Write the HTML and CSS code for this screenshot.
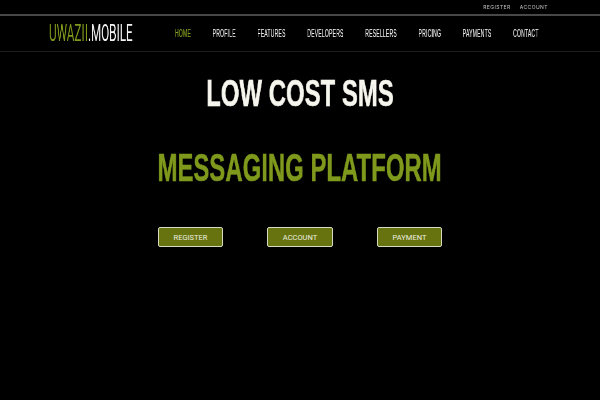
FILE: index.html
```html
<!DOCTYPE html>
<html lang="en">
<head>
<meta charset="utf-8">
<title>Uwazii Mobile</title>
<link rel="stylesheet" href="styles.css">
</head>
<body>
<div class="topbar">
  <a href="#">REGISTER</a>
  <a href="#">ACCOUNT</a>
</div>
<header class="header">
  <a class="logo" href="#"><span class="squeeze"><span class="green">UWAZII</span>.MOBILE</span></a>
  <nav class="nav">
    <a class="active" href="#">HOME</a>
    <a href="#">PROFILE</a>
    <a href="#">FEATURES</a>
    <a href="#">DEVELOPERS</a>
    <a href="#">RESELLERS</a>
    <a href="#">PRICING</a>
    <a href="#">PAYMENTS</a>
    <a href="#">CONTACT</a>
  </nav>
</header>
<main class="hero">
  <h1 class="title white"><span class="squeeze">LOW COST SMS</span></h1>
  <h1 class="title green second"><span class="squeeze">MESSAGING PLATFORM</span></h1>
  <div class="buttons">
    <a class="btn" href="#">REGISTER</a>
    <a class="btn" href="#">ACCOUNT</a>
    <a class="btn" href="#">PAYMENT</a>
  </div>
</main>
</body>
</html>
```
FILE: styles.css
```css
* { box-sizing: border-box; }
html, body { margin: 0; padding: 0; }
body {
  width: 600px;
  height: 400px;
  overflow: hidden;
  background: #000;
  color: #fff;
  font-family: "Liberation Sans", sans-serif;
}
a { color: inherit; text-decoration: none; }
.squeeze { display: inline-block; white-space: nowrap; will-change: transform; }
.green { color: #7f991c; }

.topbar {
  height: 16px;
  border-bottom: 2px solid #484848;
  display: flex;
  justify-content: flex-end;
  align-items: center;
  gap: 9px;
  padding: 0 52px 0 0;
  font-family: Inter, sans-serif;
  font-size: 5px;
  letter-spacing: 0.45px;
  color: #c4c4c4;
  will-change: transform;
}
.header {
  height: 36px;
  border-bottom: 1px solid #1c1c1c;
  display: flex;
  align-items: center;
  padding-left: 49px;
}
.logo {
  width: 104px;
  flex: none;
  font-family: Roboto, sans-serif;
  font-weight: 400;
  font-size: 23px;
  line-height: 36px;
  color: #f2f2f2;
}
.logo .squeeze { transform: scaleX(0.51); transform-origin: left center; }
.nav {
  display: flex;
  flex: none;
  width: 780px;
  font-family: "Liberation Sans", sans-serif;
  font-size: 10px;
  color: #ececec;
  margin-left: 22px;
  gap: 43px;
  letter-spacing: 0.4px;
  transform: scaleX(0.505);
  transform-origin: left center;
  will-change: transform;
  -webkit-text-stroke: 0.15px currentColor;
}
.nav .active { color: #8aa324; }

.hero { display: flex; flex-direction: column; align-items: center; }
.title {
  margin: 0;
  font-family: "Liberation Sans", sans-serif;
  font-weight: 700;
  line-height: 42px;
  text-align: center;
  -webkit-text-stroke: 0.5px currentColor;
}
.title .squeeze { transform: scaleX(0.665); }
.white { color: #f6f6ee; margin-top: 21px; font-size: 36px; }
.second { margin-top: 32px; font-size: 38px; }
.second .squeeze { transform: scaleX(0.63); }
.buttons { display: flex; gap: 44px; margin-top: 38px; }
.btn {
  width: 65.5px;
  height: 20px;
  display: flex;
  align-items: center;
  justify-content: center;
  background: #66730f;
  border: 1px solid #d6d9c0;
  border-radius: 2px;
  font-family: Roboto, sans-serif;
  font-size: 7.5px;
  font-weight: 400;
  color: #eef0e0;
}
```
